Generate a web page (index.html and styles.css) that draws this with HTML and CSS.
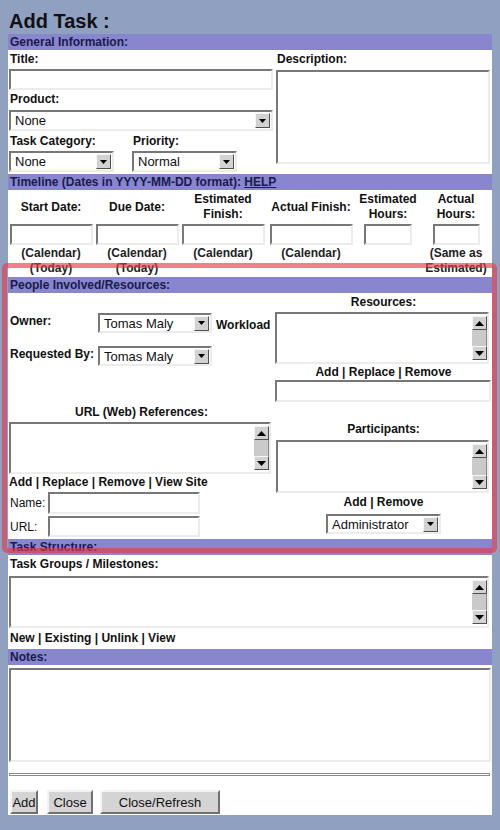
FILE: index.html
```html
<!DOCTYPE html>
<html>
<head>
<meta charset="utf-8">
<title>Add Task</title>
<link rel="stylesheet" href="styles.css">
</head>
<body>
<h1 class="title">Add Task :</h1>
<div class="panel">
  <div class="bar">General Information:</div>
  <div class="general">
    <div class="gen-left">
      <div class="lbl">Title:</div>
      <input class="field f-title" type="text">
      <div class="lbl lbl-product">Product:</div>
      <div class="select s-product"><span class="val">None</span><span class="drop"><svg width="7" height="4" viewBox="0 0 7 4"><polygon points="0,0 7,0 3.5,4" fill="#000"/></svg></span></div>
      <div class="pair">
        <div class="pair-col pair-cat">
          <div class="lbl lbl-pair">Task Category:</div>
          <div class="select s-small"><span class="val">None</span><span class="drop"><svg width="7" height="4" viewBox="0 0 7 4"><polygon points="0,0 7,0 3.5,4" fill="#000"/></svg></span></div>
        </div>
        <div class="pair-col">
          <div class="lbl lbl-pair">Priority:</div>
          <div class="select s-small"><span class="val">Normal</span><span class="drop"><svg width="7" height="4" viewBox="0 0 7 4"><polygon points="0,0 7,0 3.5,4" fill="#000"/></svg></span></div>
        </div>
      </div>
    </div>
    <div class="gen-right">
      <div class="lbl">Description:</div>
      <textarea class="area a-desc"></textarea>
    </div>
  </div>

  <div class="bar">Timeline (Dates in YYYY-MM-DD format): <span class="help">HELP</span></div>
  <div class="timeline">
    <div class="th">Start Date:</div>
    <div class="th">Due Date:</div>
    <div class="th">Estimated<br>Finish:</div>
    <div class="th">Actual Finish:</div>
    <div class="th">Estimated<br>Hours:</div>
    <div class="th">Actual<br>Hours:</div>
    <div class="td"><input class="field f-date" type="text"></div>
    <div class="td"><input class="field f-date" type="text"></div>
    <div class="td"><input class="field f-date" type="text"></div>
    <div class="td"><input class="field f-date" type="text"></div>
    <div class="td"><input class="field f-hours" type="text"></div>
    <div class="td"><input class="field f-hours2" type="text"></div>
    <div class="note">(Calendar)<br>(Today)</div>
    <div class="note">(Calendar)<br>(Today)</div>
    <div class="note">(Calendar)</div>
    <div class="note">(Calendar)</div>
    <div class="note"></div>
    <div class="note">(Same as<br>Estimated)</div>
  </div>

  <div class="bar">People Involved/Resources:</div>
  <div class="people">
    <div class="p-owner">
      <div class="own-row">
        <div class="own-lbl">Owner:</div>
        <div class="select s-owner"><span class="val">Tomas Maly</span><span class="drop"><svg width="7" height="4" viewBox="0 0 7 4"><polygon points="0,0 7,0 3.5,4" fill="#000"/></svg></span></div>
        <div class="workload">Workload</div>
      </div>
      <div class="own-row own-row2">
        <div class="own-lbl">Requested By:</div>
        <div class="select s-owner"><span class="val">Tomas Maly</span><span class="drop"><svg width="7" height="4" viewBox="0 0 7 4"><polygon points="0,0 7,0 3.5,4" fill="#000"/></svg></span></div>
      </div>
    </div>
    <div class="p-res">
      <div class="clbl">Resources:</div>
      <div class="list l-res">
        <div class="sb"><span class="sbtn"><svg width="9" height="5" viewBox="0 0 9 5"><polygon points="0,5 9,5 4.5,0" fill="#000"/></svg></span><span class="track"></span><span class="sbtn"><svg width="9" height="5" viewBox="0 0 9 5"><polygon points="0,0 9,0 4.5,5" fill="#000"/></svg></span></div>
      </div>
      <div class="links links-res">Add | Replace | Remove</div>
      <input class="field f-res" type="text">
    </div>
    <div class="p-url">
      <div class="clbl clbl-url">URL (Web) References:</div>
      <div class="list l-url">
        <div class="sb"><span class="sbtn"><svg width="9" height="5" viewBox="0 0 9 5"><polygon points="0,5 9,5 4.5,0" fill="#000"/></svg></span><span class="track"></span><span class="sbtn"><svg width="9" height="5" viewBox="0 0 9 5"><polygon points="0,0 9,0 4.5,5" fill="#000"/></svg></span></div>
      </div>
      <div class="links links-url">Add | Replace | Remove | View Site</div>
      <div class="nrow"><span class="nlbl">Name:</span><input class="field f-name" type="text"></div>
      <div class="nrow nrow2"><span class="nlbl">URL:</span><input class="field f-url" type="text"></div>
    </div>
    <div class="p-part">
      <div class="clbl">Participants:</div>
      <div class="list l-part">
        <div class="sb"><span class="sbtn"><svg width="9" height="5" viewBox="0 0 9 5"><polygon points="0,5 9,5 4.5,0" fill="#000"/></svg></span><span class="track"></span><span class="sbtn"><svg width="9" height="5" viewBox="0 0 9 5"><polygon points="0,0 9,0 4.5,5" fill="#000"/></svg></span></div>
      </div>
      <div class="links links-part">Add | Remove</div>
      <div class="select s-admin"><span class="val">Administrator</span><span class="drop"><svg width="7" height="4" viewBox="0 0 7 4"><polygon points="0,0 7,0 3.5,4" fill="#000"/></svg></span></div>
    </div>
  </div>

  <div class="bar">Task Structure:</div>
  <div class="structure">
    <div class="lbl">Task Groups / Milestones:</div>
    <div class="list l-groups">
      <div class="sb"><span class="sbtn"><svg width="9" height="5" viewBox="0 0 9 5"><polygon points="0,5 9,5 4.5,0" fill="#000"/></svg></span><span class="track"></span><span class="sbtn"><svg width="9" height="5" viewBox="0 0 9 5"><polygon points="0,0 9,0 4.5,5" fill="#000"/></svg></span></div>
    </div>
    <div class="links links-groups">New | Existing | Unlink | View</div>
  </div>

  <div class="bar">Notes:</div>
  <div class="notes">
    <textarea class="area a-notes"></textarea>
    <div class="rule"></div>
    <div class="buttons">
      <button class="btn b-add" type="button">Add</button>
      <button class="btn b-close" type="button">Close</button>
      <button class="btn b-refresh" type="button">Close/Refresh</button>
    </div>
  </div>
</div>
<div class="highlight"></div>
</body>
</html>
```

FILE: styles.css
```css
html, body {
  margin: 0;
  padding: 0;
}
body {
  background: #8fa0c1;
  font-family: "Liberation Sans", Arial, sans-serif;
  color: #111;
  padding: 0 8px;
  position: relative;
  height: 830px;
  box-sizing: border-box;
  overflow: hidden;
}
.title {
  margin: 0;
  height: 34px;
  box-sizing: border-box;
  padding: 9px 0 0 1px;
  font-size: 20px;
  line-height: 25px;
  font-weight: bold;
  color: #111;
}
.panel {
  width: 484px;
  background: #fff;
  padding-bottom: 1px;
}
.bar {
  height: 16px;
  line-height: 16px;
  background: #8886cc;
  color: #1a1a4e;
  font-size: 12px;
  font-weight: bold;
  padding-left: 2px;
}
.help {
  text-decoration: underline;
}
.lbl {
  font-size: 12px;
  font-weight: bold;
  line-height: 18px;
  padding-left: 2px;
}

/* form controls */
.field, .area, .select, .list {
  box-sizing: border-box;
  border: 2px solid;
  border-color: #787878 #ececec #ececec #787878;
  background: #fff;
  margin: 0;
  padding: 0;
  outline: none;
  display: block;
}
.field {
  height: 21px;
}
.area {
  resize: none;
  overflow: hidden;
}
.select {
  height: 21px;
  display: flex;
  align-items: center;
  justify-content: space-between;
  padding: 0 1px 0 4px;
  font-size: 13px;
  color: #111;
}
.drop {
  width: 15px;
  height: 15px;
  box-sizing: border-box;
  background: #d2d2d2;
  border: 1px solid;
  border-color: #f6f6f6 #505050 #505050 #f6f6f6;
  display: flex;
  align-items: center;
  justify-content: center;
}
.list {
  display: flex;
  justify-content: flex-end;
}
.sb {
  width: 15px;
  display: flex;
  flex-direction: column;
  padding: 2px 0;
}
.sbtn {
  height: 14px;
  box-sizing: border-box;
  background: #d2d2d2;
  border: 1px solid;
  border-color: #f6f6f6 #505050 #505050 #f6f6f6;
  display: flex;
  align-items: center;
  justify-content: center;
}
.track {
  flex: 1;
  background: #cacaca;
  border-right: 1px solid #8a8a8a;
}

/* general */
.general {
  display: flex;
  height: 124px;
}
.gen-left {
  width: 267px;
}
.gen-right {
  width: 217px;
}
.f-title {
  width: 264px;
  margin: 1px 0 0 1px;
}
.lbl-product {
  line-height: 19px;
}
.s-product {
  width: 264px;
  margin: 1px 0 0 1px;
}
.pair {
  display: flex;
}
.pair-cat {
  width: 123px;
}
.lbl-pair {
  line-height: 20px;
}
.s-small {
  width: 105px;
  margin-left: 1px;
}
.a-desc {
  width: 214px;
  height: 94px;
  margin: 2px 0 0 1px;
}

/* timeline */
.timeline {
  display: grid;
  grid-template-columns: 86px 86px 86px 90px 64px 72px;
  grid-template-rows: 34px 21px auto;
  padding-bottom: 1px;
}
.th {
  display: flex;
  align-items: center;
  justify-content: center;
  text-align: center;
  font-size: 12px;
  font-weight: bold;
  line-height: 15px;
}
.td {
  display: flex;
  justify-content: center;
}
.f-date {
  width: 83px;
}
.f-hours {
  width: 48px;
}
.f-hours2 {
  width: 47px;
}
.note {
  text-align: center;
  font-size: 12px;
  font-weight: bold;
  line-height: 15px;
  color: #222;
  padding-top: 1px;
}

/* people */
.people {
  display: grid;
  grid-template-columns: 267px 217px;
  grid-template-rows: 111px 135px;
}
.p-owner {
  padding-top: 20px;
}
.own-row {
  display: flex;
  align-items: flex-start;
}
.own-row2 {
  margin-top: 13px;
}
.own-lbl {
  width: 88px;
  padding-left: 2px;
  font-size: 12px;
  font-weight: bold;
  line-height: 16px;
}
.s-owner {
  width: 114px;
  height: 20px;
}
.workload {
  align-self: flex-end;
  margin-left: 4px;
  font-size: 12px;
  font-weight: bold;
  line-height: 16px;
}
.clbl {
  text-align: center;
  font-size: 12px;
  font-weight: bold;
  line-height: 18px;
}
.clbl-url {
  line-height: 16px;
}
.links {
  font-size: 12px;
  font-weight: bold;
  color: #111;
}
.l-res {
  width: 214px;
  height: 52px;
  margin-top: 1px;
}
.links-res {
  text-align: center;
  line-height: 16px;
}
.f-res {
  width: 216px;
  height: 22px;
}
.l-url {
  width: 262px;
  height: 52px;
  margin: 2px 0 0 1px;
}
.links-url {
  line-height: 17px;
  padding-left: 1px;
}
.nrow {
  display: flex;
  align-items: center;
  margin-top: 1px;
}
.nrow2 {
  margin-top: 2px;
}
.nlbl {
  width: 38px;
  padding-left: 2px;
  font-size: 12px;
}
.f-name {
  width: 152px;
  height: 22px;
}
.f-url {
  width: 152px;
  height: 21px;
}
.p-part {
  padding-top: 16px;
}
.l-part {
  width: 213px;
  height: 53px;
  margin: 2px 0 0 1px;
}
.links-part {
  text-align: center;
  line-height: 19px;
}
.s-admin {
  width: 115px;
  height: 20px;
  margin: 2px auto 0;
}

/* structure */
.l-groups {
  width: 480px;
  height: 52px;
  margin: 3px 0 0 1px;
}
.links-groups {
  line-height: 20px;
  padding-left: 2px;
  margin-bottom: 1px;
}

/* notes */
.a-notes {
  width: 482px;
  height: 94px;
  margin: 3px 0 0 1px;
}
.rule {
  width: 479px;
  height: 1px;
  border: 1px solid #8a8a8a;
  margin: 11px 0 0 1px;
  background: #fff;
}
.buttons {
  display: flex;
  margin: 14px 0 0 2px;
  height: 24px;
}
.btn {
  box-sizing: border-box;
  height: 24px;
  padding: 0;
  font-family: "Liberation Sans", Arial, sans-serif;
  font-size: 13px;
  color: #111;
  background: #d4d4d4;
  border: 2px solid;
  border-color: #f4f4f4 #707070 #707070 #f4f4f4;
}
.b-add {
  width: 28px;
}
.b-close {
  width: 46px;
  margin-left: 9px;
}
.b-refresh {
  width: 120px;
  margin-left: 7px;
}

/* annotation overlay */
.highlight {
  position: absolute;
  left: 2px;
  top: 263px;
  width: 495px;
  height: 290px;
  box-sizing: border-box;
  border: 5px solid rgba(232, 56, 70, 0.64);
  border-radius: 5px;
  pointer-events: none;
}
```
